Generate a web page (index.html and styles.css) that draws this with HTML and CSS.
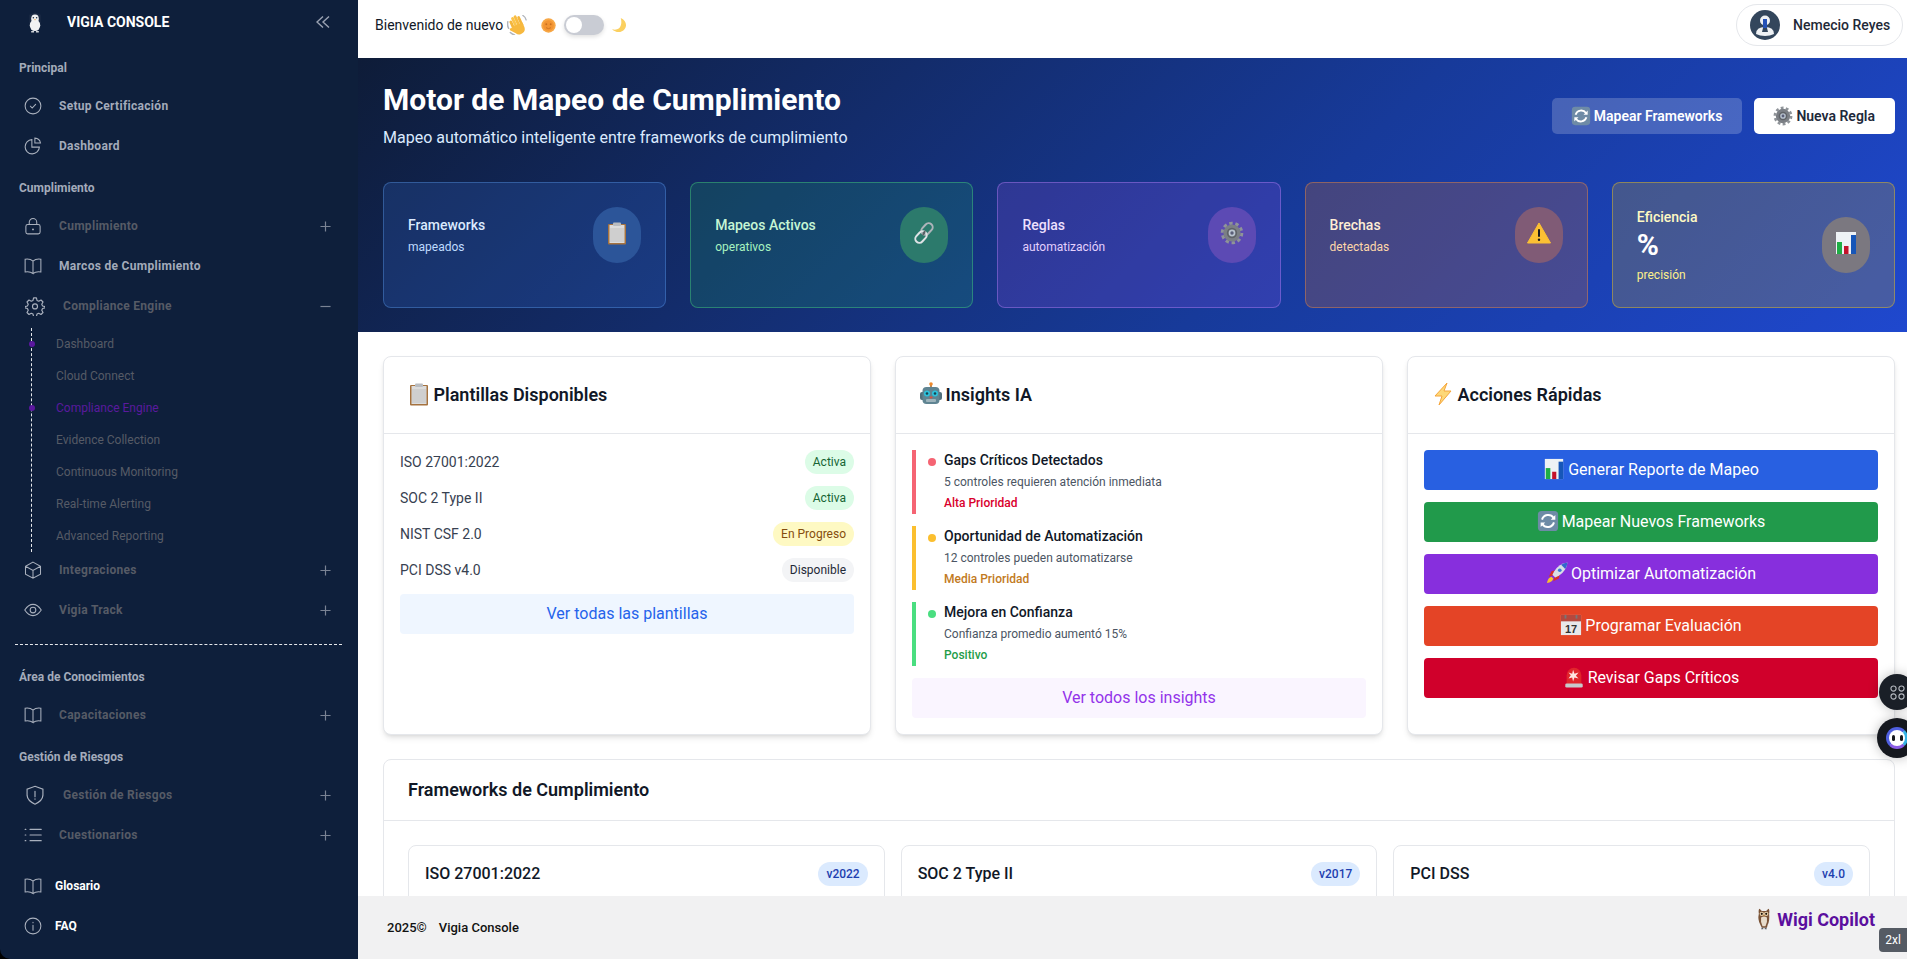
FILE: index.html
```html
<!DOCTYPE html>
<html lang="es">
<head>
<meta charset="utf-8">
<title>Vigia Console</title>
<link rel="stylesheet" href="styles.css">
</head>
<body>
<svg class="sprite" width="0" height="0" aria-hidden="true">
  <defs>
    <symbol id="e-hand" viewBox="0 0 24 24">
      <path d="M1 8 Q0 13 2 16 M4 21 Q6 23 9 24" fill="none" stroke="#b0b4bb" stroke-width="1.800" stroke-linecap="round"/>
      <path d="M19 .5 Q22 2 23 6" fill="none" stroke="#b0b4bb" stroke-width="1.500" stroke-linecap="round"/>
      <g transform="rotate(-24 12 13)">
        <rect x="5.400" y="4" width="3.400" height="13" rx="1.700" fill="#f4b63d"/>
        <rect x="9" y="1" width="3.400" height="15" rx="1.700" fill="#fbc44b"/>
        <rect x="12.600" y="0.500" width="3.400" height="15" rx="1.700" fill="#f9bd42"/>
        <rect x="16.200" y="3" width="3.300" height="13" rx="1.650" fill="#f4b63d"/>
        <path d="M5.400 12h14.100v5q0 7-7 7-4 0-5.500-3.500l-4.500-5.500q-.8-1.500.5-2.300 1.200-.6 2.800.8z" fill="#f7b93f"/>
      </g>
    </symbol>
    <symbol id="e-sun" viewBox="0 0 24 24">
      <circle cx="12" cy="12" r="11.500" fill="#f7a745"/>
      <circle cx="12" cy="12" r="8.500" fill="#f29433"/>
      <circle cx="8.500" cy="10" r="1.500" fill="#c9701f"/>
      <circle cx="15.500" cy="10" r="1.500" fill="#c9701f"/>
      <path d="M8 15.500q4 3 8 0" fill="none" stroke="#c9701f" stroke-width="1.400"/>
    </symbol>
    <symbol id="e-moon" viewBox="0 0 24 24">
      <path d="M14 0C22 3 25 12 20 18 15.500 24 6 24 0 18 8 20 12.500 17 14 12 15.500 8 15 4 14 0Z" fill="#fbd060"/>
    </symbol>
    <symbol id="e-clip" viewBox="0 0 24 24">
      <rect x="3" y="3" width="18" height="20.500" rx="1" fill="#a5723f"/>
      <rect x="4.500" y="4" width="15" height="18" fill="#dcdcdc"/>
      <rect x="5" y="7" width="14" height="14" fill="#cfcfcf"/>
      <rect x="8" y="1.500" width="8" height="3.500" rx="1" fill="#b9bcc0"/>
    </symbol>
    <symbol id="e-link" viewBox="0 0 24 24">
      <g fill="none" stroke-width="2">
        <rect x="11" y="1.500" width="8" height="13" rx="4" transform="rotate(42 15 8)" stroke="#aeb4ba"/>
        <rect x="5" y="9.500" width="8" height="13" rx="4" transform="rotate(42 9 16)" stroke="#dfe3e6"/>
        <path d="M13 10l-2 4" stroke="#5b6066"/>
      </g>
    </symbol>
    <symbol id="e-gear" viewBox="0 0 24 24">
      <circle cx="12" cy="12" r="9.800" fill="none" stroke="#8f9499" stroke-width="3" stroke-dasharray="3.400 2.760"/>
      <circle cx="12" cy="12" r="8.600" fill="#7b7f85"/>
      <circle cx="12" cy="12" r="5.200" fill="#5f6368"/>
      <circle cx="12" cy="12" r="3.400" fill="#b9c3cf"/>
      <circle cx="12" cy="12" r="1.700" fill="#5a5f78"/>
    </symbol>
    <symbol id="e-warn" viewBox="0 0 24 24">
      <path d="M12 2 23.500 22H.5z" fill="#fcc033" stroke="#fcc033" stroke-width="1" stroke-linejoin="round"/>
      <rect x="11" y="8" width="2" height="8" rx="1" fill="#1b1b1b"/>
      <circle cx="12" cy="18.700" r="1.200" fill="#1b1b1b"/>
    </symbol>
    <symbol id="e-chart" viewBox="0 0 24 24">
      <rect x="2" y="1" width="20" height="22" fill="#eef2f5"/>
      <rect x="3" y="11" width="5" height="12" fill="#1fae45"/>
      <rect x="10" y="15" width="4.500" height="8" fill="#c4122a"/>
      <rect x="17" y="4" width="5" height="19" fill="#1656b8"/>
    </symbol>
    <symbol id="e-sync" viewBox="0 0 24 24">
      <rect x="1" y="1" width="22" height="22" rx="4" fill="#6e8ba6"/>
      <path d="M5.500 10.500A7 7 0 0 1 18 8.500M18.500 13.500A7 7 0 0 1 6 15.500" fill="none" stroke="#fff" stroke-width="2.200"/>
      <path d="M20 5.500v5h-5zM4 18.500v-5h5z" fill="#fff"/>
    </symbol>
    <symbol id="e-robot" viewBox="0 0 24 24">
      <rect x="11" y="1" width="2" height="5" fill="#b88a5a"/>
      <circle cx="12" cy="2" r="1.800" fill="#f08a2c"/>
      <rect x="1" y="10" width="22" height="8" rx="2" fill="#51707c"/>
      <rect x="3.500" y="5" width="17" height="17" rx="4" fill="#5f8492"/>
      <circle cx="8" cy="11.500" r="3" fill="#2dc2dd"/>
      <circle cx="16" cy="11.500" r="3" fill="#2dc2dd"/>
      <circle cx="8" cy="11.500" r="1.300" fill="#17424f"/>
      <circle cx="16" cy="11.500" r="1.300" fill="#17424f"/>
      <rect x="7" y="17" width="10" height="3" rx="1" fill="#9db3bb"/>
      <rect x="10.500" y="14.500" width="3" height="2" rx="1" fill="#d8503c"/>
    </symbol>
    <symbol id="e-bolt" viewBox="0 0 24 24">
      <path d="M16 1 4 14h7L8 23 20 9h-7z" fill="#fdd878" stroke="#f5a53b" stroke-width="1"/>
    </symbol>
    <symbol id="e-rocket" viewBox="0 0 24 24">
      <path d="M7 15l-4 1 3-6 4-1zM9 17l-1 4 6-3 1-4z" fill="#d6302b"/>
      <path d="M1 23q1-6 5-7l2 2q-1 4-7 5z" fill="#f7c22f"/>
      <path d="M23.500 .5Q14 2 9 10l-2 4 3 3 4-2Q22 10 23.500 .5z" fill="#d9dee6"/>
      <path d="M23.500 .5q-4 .5-7 2.500l4.500 4.500q2-3 2.500-7z" fill="#3366cc"/>
      <circle cx="15" cy="9" r="2" fill="#3a7bd5"/>
    </symbol>
    <symbol id="e-cal" viewBox="0 0 24 24">
      <rect x="1" y="1" width="22" height="22" fill="#e8e8ea"/>
      <rect x="1" y="1" width="22" height="7" fill="#b5483d"/>
      <rect x="5" y="1" width="2" height="4" fill="#777"/>
      <rect x="17" y="1" width="2" height="4" fill="#777"/>
      <text x="12" y="21" class="cal-num" text-anchor="middle">17</text>
    </symbol>
    <symbol id="e-siren" viewBox="0 0 24 24">
      <path d="M4 20V10a8 8 0 0 1 16 0v10z" fill="#e1252b"/>
      <rect x="2.500" y="19" width="19" height="4.500" rx="1.500" fill="#c7c9cc"/>
      <path d="M11 4l1.500 4.500L17 7l-3 3.500 3 3-4.500-1L11 17l-1-4.500-4 1 2.500-3.500L6 7l4 1.500z" fill="#ffe6e0"/>
    </symbol>
    <symbol id="e-owl" viewBox="0 0 20 30">
      <path d="M3 8Q2 2 4 1l3 3h6l3-3q2 1 1 7 1 10-2 15l-1 4H7l-2-4Q1 16 3 8z" fill="#7a5337"/>
      <path d="M6 13q4-3 8 0 1 7-2 12H8q-3-5-2-12z" fill="#e7dccb"/>
      <circle cx="7" cy="8" r="3" fill="#e7cfa8"/>
      <circle cx="13" cy="8" r="3" fill="#e7cfa8"/>
      <circle cx="7" cy="8" r="1.400" fill="#1a1108"/>
      <circle cx="13" cy="8" r="1.400" fill="#1a1108"/>
      <path d="M9 10h2l-1 2z" fill="#d49a3b"/>
      <path d="M7 27h2v2H6zM11 27h2l1 2h-3z" fill="#58616a"/>
    </symbol>
    <symbol id="logo" viewBox="0 0 16 22">
      <path d="M8 0.500 14 3v8l-3 9H5L2 11V3z" fill="#1b2a44"/>
      <ellipse cx="8" cy="7" rx="4" ry="4.500" fill="#eef0f2"/>
      <ellipse cx="8" cy="14" rx="5.500" ry="6" fill="#f1f2f3"/>
      <circle cx="6.300" cy="6" r=".8" fill="#1f2937"/>
      <circle cx="9.700" cy="6" r=".8" fill="#1f2937"/>
      <path d="M7 7.500h2L8 9z" fill="#f59e2e"/>
      <path d="M4 20h3v1.500H4zM9 20h3v1.500H9z" fill="#cfd3d8"/>
    </symbol>
    <symbol id="avatar" viewBox="0 0 30 30">
      <circle cx="15" cy="15" r="15" fill="#33465c"/>
      <circle cx="15" cy="10.500" r="5" fill="#eef1f4"/>
      <path d="M6 24q0-7 9-7t9 7q-4 2-9 2t-9-2z" fill="#eef1f4"/>
      <rect x="13" y="9" width="4" height="10" fill="#2452b8"/>
      <path d="M12 22h6l-1-4h-4z" fill="#33465c"/>
    </symbol>
    <symbol id="i-check" viewBox="0 0 24 24"><circle cx="12" cy="12" r="10.500"/><path d="M8.500 12.300l2.400 2.400 4.600-5"/></symbol>
    <symbol id="i-pie" viewBox="0 0 24 24"><path d="M10.500 3.500a9.500 9.500 0 1 0 10 10h-10z"/><path d="M14.500 1.500v6.500H22A8 8 0 0 0 14.500 1.500z"/></symbol>
    <symbol id="i-lock" viewBox="0 0 24 24"><rect x="2.500" y="10" width="19" height="12.500" rx="2.500"/><path d="M7 10V7a5 5 0 0 1 10 0v3"/><circle cx="12" cy="16.500" r=".6"/></symbol>
    <symbol id="i-book" viewBox="0 0 24 24"><path d="M12 5.500V22Q8 19 1.500 20V3Q8 2 12 5.500Q16 2 22.500 3V20Q16 19 12 22"/></symbol>
    <symbol id="i-gear" viewBox="0 0 24 24"><path d="M10.300 2.300h3.400l.7 3 2.100 1 2.700-1.500 2.400 2.400-1.500 2.700 1 2.100 3 .7v1.600l-3 .7-1 2.100 1.500 2.700-2.400 2.400-2.700-1.500-2.100 1-.7 3h-3.400l-.7-3-2.100-1-2.700 1.500-2.400-2.400 1.500-2.700-1-2.100-3-.7v-1.600l3-.7 1-2.100-1.500-2.700 2.400-2.400 2.700 1.500 2.100-1z" stroke-linejoin="round"/><circle cx="12" cy="12.500" r="3"/></symbol>
    <symbol id="i-box" viewBox="0 0 24 24"><path d="M12 1.500 22 7v10.500L12 23 2 17.500V7zM2 7l10 5.500L22 7M12 12.500V23"/></symbol>
    <symbol id="i-eye" viewBox="0 0 24 24"><path d="M1 12Q6 4.500 12 4.500T23 12Q18 19.500 12 19.500T1 12z"/><circle cx="12" cy="12" r="3.800"/></symbol>
    <symbol id="i-shield" viewBox="0 0 24 24"><path d="M12 1.500 21.500 5v7.500Q21 19 12 23 3 19 2.500 12.500V5z"/><path d="M12 7.500v6.500M12 16.500v.6"/></symbol>
    <symbol id="i-list" viewBox="0 0 24 24"><path d="M8 4.500h15M8 12h15M8 19.500h15M1.500 4.500h1M1.500 12h1M1.500 19.500h1"/></symbol>
    <symbol id="i-info" viewBox="0 0 24 24"><circle cx="12" cy="12" r="10.500"/><path d="M12 11v6.500M12 7v.6"/></symbol>
    <symbol id="i-plus" viewBox="0 0 12 12"><path d="M6 .500v11M.500 6h11"/></symbol>
    <symbol id="i-minus" viewBox="0 0 12 12"><path d="M.500 6h11"/></symbol>
    <symbol id="i-dbl" viewBox="0 0 14 12"><path d="M7 .500 1 6l6 5.500M13 .500 7 6l6 5.500"/></symbol>
    <symbol id="i-four" viewBox="0 0 16 16"><rect x="1" y="1" width="5.500" height="5.500" rx="2.700"/><rect x="9.500" y="1" width="5.500" height="5.500" rx="2.700"/><rect x="1" y="9.500" width="5.500" height="5.500" rx="2.700"/><rect x="9.500" y="9.500" width="5.500" height="5.500" rx="2.700"/></symbol>
  </defs>
</svg>

<div class="app">
  <aside class="sidebar">
    <div class="brand">
      <svg class="brand-logo"><use href="#logo"/></svg>
      <span class="brand-name">VIGIA CONSOLE</span>
      <svg class="brand-toggle"><use href="#i-dbl"/></svg>
    </div>

    <div class="nav-label">Principal</div>
    <a class="nav-item bright"><svg class="nav-ico"><use href="#i-check"/></svg><span>Setup Certificación</span></a>
    <a class="nav-item bright"><svg class="nav-ico"><use href="#i-pie"/></svg><span>Dashboard</span></a>

    <div class="nav-label">Cumplimiento</div>
    <a class="nav-item"><svg class="nav-ico"><use href="#i-lock"/></svg><span>Cumplimiento</span><svg class="nav-more"><use href="#i-plus"/></svg></a>
    <a class="nav-item bright"><svg class="nav-ico"><use href="#i-book"/></svg><span>Marcos de Cumplimiento</span></a>
    <a class="nav-item big"><svg class="nav-ico"><use href="#i-gear"/></svg><span>Compliance Engine</span><svg class="nav-more"><use href="#i-minus"/></svg></a>
    <ul class="subnav">
      <li class="sub marked">Dashboard</li>
      <li class="sub">Cloud Connect</li>
      <li class="sub marked current">Compliance Engine</li>
      <li class="sub">Evidence Collection</li>
      <li class="sub">Continuous Monitoring</li>
      <li class="sub">Real-time Alerting</li>
      <li class="sub">Advanced Reporting</li>
    </ul>
    <a class="nav-item"><svg class="nav-ico"><use href="#i-box"/></svg><span>Integraciones</span><svg class="nav-more"><use href="#i-plus"/></svg></a>
    <a class="nav-item"><svg class="nav-ico"><use href="#i-eye"/></svg><span>Vigia Track</span><svg class="nav-more"><use href="#i-plus"/></svg></a>

    <hr class="nav-divider">

    <div class="nav-label after-divider">Área de Conocimientos</div>
    <a class="nav-item"><svg class="nav-ico"><use href="#i-book"/></svg><span>Capacitaciones</span><svg class="nav-more"><use href="#i-plus"/></svg></a>
    <div class="nav-label">Gestión de Riesgos</div>
    <a class="nav-item big"><svg class="nav-ico"><use href="#i-shield"/></svg><span>Gestión de Riesgos</span><svg class="nav-more"><use href="#i-plus"/></svg></a>
    <a class="nav-item"><svg class="nav-ico"><use href="#i-list"/></svg><span>Cuestionarios</span><svg class="nav-more"><use href="#i-plus"/></svg></a>

    <a class="nav-item white first-foot"><svg class="nav-ico"><use href="#i-book"/></svg><span>Glosario</span></a>
    <a class="nav-item white"><svg class="nav-ico"><use href="#i-info"/></svg><span>FAQ</span></a>
  </aside>

  <div class="main">
    <header class="topbar">
      <span class="welcome">Bienvenido de nuevo <svg class="e-wave"><use href="#e-hand"/></svg></span>
      <div class="theme">
        <svg class="theme-ico"><use href="#e-sun"/></svg>
        <span class="switch"><span class="knob"></span></span>
        <svg class="theme-ico"><use href="#e-moon"/></svg>
      </div>
      <div class="user">
        <svg class="user-pic"><use href="#avatar"/></svg>
        <span class="user-name">Nemecio Reyes</span>
      </div>
    </header>

    <main class="content">
      <section class="hero">
        <div class="hero-top">
          <div>
            <h1 class="hero-title">Motor de Mapeo de Cumplimiento</h1>
            <p class="hero-sub">Mapeo automático inteligente entre frameworks de cumplimiento</p>
          </div>
          <div class="hero-actions">
            <button class="hero-btn ghost"><svg class="emoji"><use href="#e-sync"/></svg> Mapear Frameworks</button>
            <button class="hero-btn solid"><svg class="emoji"><use href="#e-gear"/></svg> Nueva Regla</button>
          </div>
        </div>
        <div class="stats">
          <div class="stat blue">
            <div class="stat-row">
              <div><div class="stat-title">Frameworks</div><div class="stat-sub">mapeados</div></div>
              <div class="stat-ico"><svg class="stat-emoji"><use href="#e-clip"/></svg></div>
            </div>
          </div>
          <div class="stat green">
            <div class="stat-row">
              <div><div class="stat-title">Mapeos Activos</div><div class="stat-sub">operativos</div></div>
              <div class="stat-ico"><svg class="stat-emoji"><use href="#e-link"/></svg></div>
            </div>
          </div>
          <div class="stat purple">
            <div class="stat-row">
              <div><div class="stat-title">Reglas</div><div class="stat-sub">automatización</div></div>
              <div class="stat-ico"><svg class="stat-emoji"><use href="#e-gear"/></svg></div>
            </div>
          </div>
          <div class="stat orange">
            <div class="stat-row">
              <div><div class="stat-title">Brechas</div><div class="stat-sub">detectadas</div></div>
              <div class="stat-ico"><svg class="stat-emoji"><use href="#e-warn"/></svg></div>
            </div>
          </div>
          <div class="stat yellow">
            <div class="stat-row">
              <div><div class="stat-title">Eficiencia</div><div class="stat-num">%</div><div class="stat-sub">precisión</div></div>
              <div class="stat-ico"><svg class="stat-emoji"><use href="#e-chart"/></svg></div>
            </div>
          </div>
        </div>
      </section>

      <div class="body">
        <div class="panels">
          <section class="panel">
            <h2 class="panel-head"><svg class="head-emoji"><use href="#e-clip"/></svg> Plantillas Disponibles</h2>
            <div class="panel-body">
              <div class="tpl"><span>ISO 27001:2022</span><span class="pill ok">Activa</span></div>
              <div class="tpl"><span>SOC 2 Type II</span><span class="pill ok">Activa</span></div>
              <div class="tpl"><span>NIST CSF 2.0</span><span class="pill wip">En Progreso</span></div>
              <div class="tpl"><span>PCI DSS v4.0</span><span class="pill idle">Disponible</span></div>
              <a class="more more-blue">Ver todas las plantillas</a>
            </div>
          </section>

          <section class="panel">
            <h2 class="panel-head"><svg class="head-emoji"><use href="#e-robot"/></svg> Insights IA</h2>
            <div class="panel-body">
              <div class="insight i-red">
                <span class="dot"></span>
                <div>
                  <div class="insight-title">Gaps Críticos Detectados</div>
                  <div class="insight-desc">5 controles requieren atención inmediata</div>
                  <div class="insight-tag">Alta Prioridad</div>
                </div>
              </div>
              <div class="insight i-amber">
                <span class="dot"></span>
                <div>
                  <div class="insight-title">Oportunidad de Automatización</div>
                  <div class="insight-desc">12 controles pueden automatizarse</div>
                  <div class="insight-tag">Media Prioridad</div>
                </div>
              </div>
              <div class="insight i-green">
                <span class="dot"></span>
                <div>
                  <div class="insight-title">Mejora en Confianza</div>
                  <div class="insight-desc">Confianza promedio aumentó 15%</div>
                  <div class="insight-tag">Positivo</div>
                </div>
              </div>
              <a class="more more-purple">Ver todos los insights</a>
            </div>
          </section>

          <section class="panel">
            <h2 class="panel-head"><svg class="head-emoji"><use href="#e-bolt"/></svg> Acciones Rápidas</h2>
            <div class="panel-body">
              <button class="action a-blue"><svg class="emoji"><use href="#e-chart"/></svg> Generar Reporte de Mapeo</button>
              <button class="action a-green"><svg class="emoji"><use href="#e-sync"/></svg> Mapear Nuevos Frameworks</button>
              <button class="action a-purple"><svg class="emoji"><use href="#e-rocket"/></svg> Optimizar Automatización</button>
              <button class="action a-orange"><svg class="emoji"><use href="#e-cal"/></svg> Programar Evaluación</button>
              <button class="action a-red"><svg class="emoji"><use href="#e-siren"/></svg> Revisar Gaps Críticos</button>
            </div>
          </section>
        </div>

        <section class="fw-panel">
          <h2 class="fw-head">Frameworks de Cumplimiento</h2>
          <div class="fw-grid">
            <div class="fw-card"><span class="fw-name">ISO 27001:2022</span><span class="fw-ver">v2022</span></div>
            <div class="fw-card"><span class="fw-name">SOC 2 Type II</span><span class="fw-ver">v2017</span></div>
            <div class="fw-card"><span class="fw-name">PCI DSS</span><span class="fw-ver">v4.0</span></div>
          </div>
        </section>
      </div>
    </main>

    <footer class="footer">
      <span class="copy"><span>2025©</span><span>Vigia Console</span></span>
      <span class="copilot"><svg class="owl"><use href="#e-owl"/></svg>Wigi Copilot</span>
    </footer>
  </div>
</div>

<div class="float float-a"><svg class="float-four"><use href="#i-four"/></svg></div>
<div class="float float-b"><span class="bot"><span class="bot-eye"></span><span class="bot-eye"></span></span></div>
<div class="breakpoint">2xl</div>
</body>
</html>
```

FILE: styles.css
```css
* { box-sizing: border-box; }
html, body { margin: 0; height: 100%; }
body {
  background: #000;
  font-family: Roboto, "Noto Sans", "Liberation Sans", sans-serif;
  color: #111827;
  overflow: hidden;
  font-size: 14px;
}
.sprite { position: absolute; }
.cal-num { font: 700 12px "Liberation Sans", sans-serif; fill: #333; }

.app { display: grid; grid-template-columns: 358px 1fr; height: 100vh; }

/* Sidebar */
.sidebar {
  background: #0e1f3b;
  border-bottom-left-radius: 10px;
  overflow: hidden;
  font-size: 12px;
}
.brand { display: flex; align-items: center; height: 46px; padding: 0 28px 2px 27px; }
.brand-logo { width: 16px; height: 21px; margin-right: 24px; }
.brand-name { color: #fff; font-weight: 700; font-size: 14px; }
.brand-toggle { width: 14px; height: 12px; margin-left: auto; fill: none; stroke: #9aa2b2; stroke-width: 1.400; }

.nav-label {
  height: 16px; line-height: 16px;
  margin: 14px 0 10px 19px;
  font-weight: 700; color: #a3abba;
}
.nav-label.after-divider { margin-top: 24px; }
.nav-item {
  display: flex; align-items: center;
  height: 40px; padding: 0 27px 0 24px;
  font-weight: 700; letter-spacing: .3px; color: #565b66;
}
.nav-item.bright { color: #a3abba; }
.nav-item.white { color: #fff; letter-spacing: 0; }
.nav-item.white .nav-ico { margin-right: 13px; }
.nav-item.first-foot { margin-top: 11px; }
.nav-ico {
  width: 18px; height: 18px; margin-right: 17px; flex: none;
  fill: none; stroke: #a9b0bd; stroke-width: 1.400; stroke-linecap: round;
}
.nav-item.big .nav-ico { width: 20px; height: 20px; margin-left: 1px; margin-right: 18px; }
.nav-more { width: 11px; height: 11px; margin-left: auto; fill: none; stroke: #7a8394; stroke-width: 1.300; }

.subnav {
  list-style: none;
  margin: 2px 0 -2px 31px; padding: 0 0 0 24px;
  border-left: 1px dashed #e5e7eb;
}
.sub { position: relative; height: 32px; line-height: 32px; color: #565b66; font-size: 12px; }
.sub.marked::before {
  content: ""; position: absolute; left: -27.500px; top: 13px;
  width: 6px; height: 6px; border-radius: 50%; background: #5b189f;
}
.sub.current { color: #5a1a9e; }
.nav-divider { margin: 14px 16px 0 15px; height: 0; border: 0; border-top: 1px dashed #e5e7eb; }

/* Main */
.main { display: flex; flex-direction: column; background: #fff; min-width: 0; height: 100vh; }
.topbar { display: flex; align-items: center; height: 58px; flex: none; padding: 0 4px 8px 17px; }
.welcome { display: flex; align-items: center; font-size: 14px; white-space: pre; }
.e-wave { width: 20px; height: 20px; }
.emoji { width: 20px; height: 20px; }
.theme { display: flex; align-items: center; gap: 8px; margin-left: 14px; }
.theme-ico { width: 15px; height: 15px; }
.switch { display: block; width: 40px; height: 20px; border-radius: 10px; background: #c9ccd4; padding: 2px; box-shadow: 0 2px 4px rgba(0,0,0,.12); }
.knob { display: block; width: 16px; height: 16px; border-radius: 50%; background: #fff; }
.user {
  display: flex; align-items: center; margin-left: auto;
  height: 42px; width: 167px; padding-left: 13px;
  border: 1px solid #e5e7eb; border-radius: 21px;
}
.user-pic { width: 30px; height: 30px; margin-right: 13px; }
.user-name { font-weight: 500; font-size: 14px; color: #1f2937; }

.content { flex: 1; min-height: 0; overflow: hidden; }

/* Hero */
.hero {
  padding: 24px 12px 24px 25px;
  background: linear-gradient(135deg, #0e1c38 0%, #132c6b 31%, #173a9a 60%, #1f48ce 100%);
  color: #fff;
}
.hero-top { display: flex; justify-content: space-between; align-items: center; margin-bottom: 32px; }
.hero-title { margin: 0 0 8px; font-size: 30px; line-height: 36px; font-weight: 700; }
.hero-sub { margin: 0; font-size: 16px; line-height: 24px; color: #dbeafe; }
.hero-actions { display: flex; gap: 12px; }
.hero-btn {
  height: 36px; padding: 0 20px 0 19px; border: 0; border-radius: 5px;
  font: 600 14px Roboto, sans-serif; display: flex; align-items: center; gap: 3px;
}
.hero-btn.ghost { background: rgba(255,255,255,.2); color: #fff; }
.hero-btn.solid { background: #fff; color: #1e293b; }

.stats { display: grid; grid-template-columns: repeat(5, 1fr); gap: 24px; }
.stat { padding: 24px; border: 1px solid; border-radius: 8px; }
.stat-row { display: flex; justify-content: space-between; align-items: center; }
.stat-title { font-size: 14px; line-height: 20px; font-weight: 500; }
.stat-sub { font-size: 12px; line-height: 16px; margin-top: 4px; }
.stat-num { font-size: 30px; line-height: 36px; font-weight: 700; color: #fff; }
.stat-ico { width: 48px; height: 56px; border-radius: 24px; display: flex; align-items: center; justify-content: center; padding-bottom: 4px; }
.stat-emoji { width: 24px; height: 24px; }
.stat.blue { background: rgba(59,130,246,.18); border-color: rgba(96,165,250,.35); }
.stat.blue .stat-title { color: #dbeafe; } .stat.blue .stat-sub { color: #bfdbfe; }
.stat.blue .stat-ico { background: #2c5599; }
.stat.green { background: rgba(34,197,94,.16); border-color: rgba(74,222,128,.4); }
.stat.green .stat-title { color: #c6f6d5; } .stat.green .stat-sub { color: #a7f3c0; }
.stat.green .stat-ico { background: #2c7a6c; }
.stat.purple { background: rgba(168,85,247,.18); border-color: rgba(192,132,252,.4); }
.stat.purple .stat-title { color: #ede0fe; } .stat.purple .stat-sub { color: #e3d0fd; }
.stat.purple .stat-ico { background: #5c4ab4; }
.stat.orange { background: rgba(249,115,22,.2); border-color: rgba(251,146,60,.4); }
.stat.orange .stat-title { color: #ffedd5; } .stat.orange .stat-sub { color: #fed7aa; }
.stat.orange .stat-ico { background: #805b76; }
.stat.yellow { background: rgba(234,179,8,.2); border-color: rgba(250,204,21,.4); }
.stat.yellow .stat-title { color: #fef9c3; } .stat.yellow .stat-sub { color: #fef08a; }
.stat.yellow .stat-ico { background: #7b7880; }

/* Body */
.body { padding: 24px 12px 0 25px; }
.panels { display: grid; grid-template-columns: repeat(3, 1fr); gap: 24px; margin-bottom: 24px; }
.panel { background: #fff; border: 1px solid #e5e7eb; border-radius: 8px; box-shadow: 0 4px 6px -1px rgba(0,0,0,.1), 0 2px 4px -2px rgba(0,0,0,.1); }
.panel-head { margin: 0; height: 77px; padding: 24px; font-size: 18px; line-height: 28px; font-weight: 600; border-bottom: 1px solid #e5e7eb; color: #111827; }
.head-emoji { width: 24px; height: 24px; margin: 0 -2px 0 -1px; vertical-align: -5px; }
.panel-body { padding: 16px; display: flex; flex-direction: column; gap: 12px; }

.tpl { display: flex; justify-content: space-between; align-items: center; height: 24px; font-size: 14px; color: #374151; }
.pill { height: 24px; line-height: 24px; padding: 0 8px; border-radius: 12px; font-size: 12px; }
.pill.ok { background: #dcfce7; color: #166534; }
.pill.wip { background: #fef9c3; color: #854d0e; }
.pill.idle { background: #f3f4f6; color: #1f2937; }
.more { display: block; height: 40px; line-height: 40px; text-align: center; border-radius: 4px; font-size: 16px; }
.more-blue { background: #eff6ff; color: #2563eb; }
.more-purple { background: #faf5ff; color: #9333ea; }

.insight { display: flex; align-items: flex-start; height: 64px; border-left: 4px solid; padding-left: 12px; }
.dot { width: 8px; height: 8px; border-radius: 50%; margin: 8px 8px 0 0; flex: none; }
.insight-title { font-size: 14px; line-height: 20px; font-weight: 500; color: #111827; }
.insight-desc { font-size: 12px; line-height: 16px; margin-top: 4px; color: #4b5563; }
.insight-tag { font-size: 12px; line-height: 16px; margin-top: 5px; font-weight: 500; }
.i-red { border-color: #f56473; } .i-red .dot { background: #f56473; } .i-red .insight-tag { color: #d9002c; }
.i-amber { border-color: #fbbf2f; } .i-amber .dot { background: #fbbf2f; } .i-amber .insight-tag { color: #c27a22; }
.i-green { border-color: #4ade80; } .i-green .dot { background: #4ade80; } .i-green .insight-tag { color: #1f9d49; }

.action {
  height: 40px; border: 0; border-radius: 4px; color: #fff; padding: 0 0 2px;
  font: 400 16px Roboto, sans-serif; display: flex; align-items: center; justify-content: center; gap: 3px;
}
.action .emoji { width: 22px; height: 22px; }
.a-blue { background: #2860e1; } .a-green { background: #219a4b; } .a-purple { background: #872fdd; }
.a-orange { background: #e44426; } .a-red { background: #d0002b; }

.fw-panel { border: 1px solid #e5e7eb; border-radius: 8px; }
.fw-head { margin: 0; height: 61px; padding: 16px 24px; font-size: 18px; line-height: 28px; font-weight: 600; border-bottom: 1px solid #e5e7eb; }
.fw-grid { display: grid; grid-template-columns: repeat(3, 1fr); gap: 16px; padding: 24px; }
.fw-card { display: flex; justify-content: space-between; height: 120px; align-items: flex-start; padding: 16px; border: 1px solid #e5e7eb; border-radius: 8px; }
.fw-name { font-size: 16px; line-height: 24px; font-weight: 500; }
.fw-ver { height: 24px; line-height: 24px; padding: 0 8px; border-radius: 12px; background: #dbeafe; color: #1e40af; font-size: 12px; font-weight: 500; }

.footer { flex: none; height: 63px; background: #f1f1f2; display: flex; justify-content: space-between; padding: 0 32px 0 29px; position: relative; }
.copy { display: flex; gap: 12px; align-items: center; font-size: 13px; font-weight: 500; color: #111; }
.copilot { display: flex; align-items: center; gap: 4px; height: 46px; font-size: 18px; font-weight: 700; color: #5b0f9e; }
.owl { width: 18px; height: 22px; }

/* Overlays */
.float { position: fixed; border-radius: 50%; background: #1a1f27; box-shadow: 0 0 12px rgba(0,0,0,.25); display: flex; align-items: center; }
.float-a { left: 1879px; top: 674px; width: 36px; height: 36px; padding-left: 11px; }
.float-four { width: 15px; height: 15px; fill: none; stroke: #b4b8bf; stroke-width: 1.200; flex: none; }
.float-b { left: 1877px; top: 718px; width: 40px; height: 40px; background: #15181e; padding-left: 9px; }
.bot { width: 22px; height: 22px; flex: none; border-radius: 50%; background: #fff; border: 3px solid #4f5fe0; border-right-color: #35b3e6; border-bottom-color: #8a5ce6; display: flex; align-items: center; justify-content: center; gap: 5px; }
.bot-eye { width: 3px; height: 6px; background: #15181e; border-radius: 2px; }
.breakpoint { position: fixed; left: 1879px; top: 928px; width: 28px; height: 24px; line-height: 24px; text-align: center; font-size: 12px; color: #fff; background: #555b64; border-radius: 4px 0 0 4px; }
```
